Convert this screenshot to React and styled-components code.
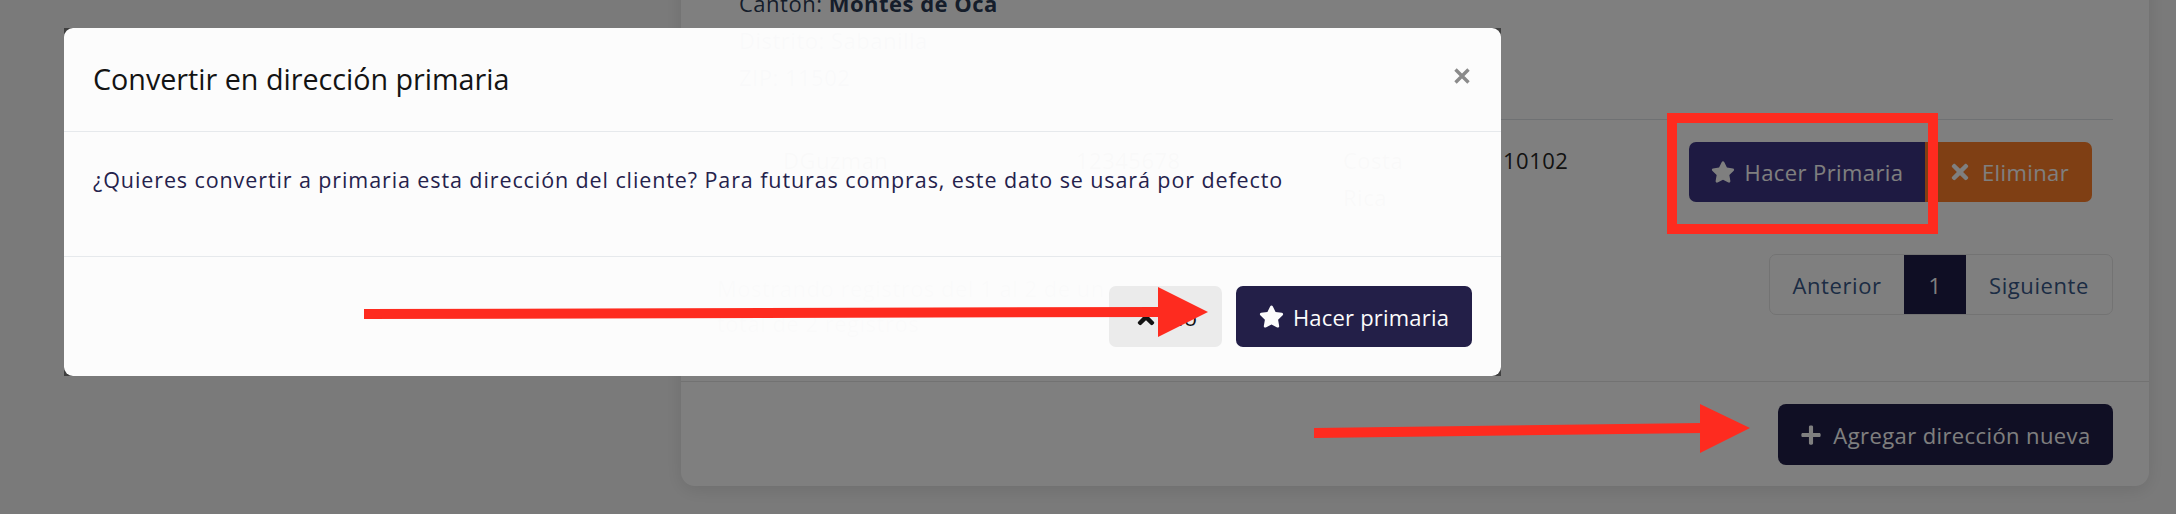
import React from 'react'
import styled, { createGlobalStyle } from 'styled-components'
import { FaStar, FaTimes, FaPlus } from 'react-icons/fa'

const GlobalStyle = createGlobalStyle`
	html, body {
		margin: 0;
		padding: 0;
	}
	body {
		width: 2176px;
		height: 514px;
		overflow: hidden;
		background: #f5f5f5;
		font-family: 'Open Sans', Lato, sans-serif;
	}
	* {
		box-sizing: border-box;
	}
`

function AddressPage() {
	return (
		<StyledPage>
			<StyledCard>
				<StyledCardBody>
					<StyledDetails>
						<div>
							Provincia: <b>San José</b>
						</div>
						<div>
							Canton: <b>Montes de Oca</b>
						</div>
						<div>Distrito: Sabanilla</div>
						<div>ZIP: 11502</div>
					</StyledDetails>
					<StyledRow>
						<StyledCell $center>
							<StyledRadio />
						</StyledCell>
						<StyledCell>DGuzman</StyledCell>
						<StyledCell>12345678</StyledCell>
						<StyledCell $narrow>Costa Rica</StyledCell>
						<StyledCell>10102</StyledCell>
						<StyledCell>
							<StyledButtonGroup>
								<StyledRowButton $bg="#3c3584" $w="236px" $first>
									<FaStar size={24} />
									Hacer Primaria
								</StyledRowButton>
								<StyledRowButton $bg="#fe7e28" $w="167px">
									<FaTimes size={24} />
									Eliminar
								</StyledRowButton>
							</StyledButtonGroup>
						</StyledCell>
					</StyledRow>
					<StyledTableFooter>
						<StyledInfo>
							Mostrando registros del 1 al 2 de un total de 2 registros
						</StyledInfo>
						<StyledPagination>
							<StyledPageLink $w="134px">Anterior</StyledPageLink>
							<StyledPageLink $w="62px" $active>
								1
							</StyledPageLink>
							<StyledPageLink $w="146px">Siguiente</StyledPageLink>
						</StyledPagination>
					</StyledTableFooter>
				</StyledCardBody>
				<StyledCardFooter>
					<StyledAddButton>
						<FaPlus size={22} />
						Agregar dirección nueva
					</StyledAddButton>
				</StyledCardFooter>
			</StyledCard>
		</StyledPage>
	)
}

function PrimaryModal() {
	return (
		<>
			<StyledBackdrop />
			<StyledDialog role="dialog">
				<StyledModalHeader>
					<StyledModalTitle>Convertir en dirección primaria</StyledModalTitle>
					<StyledClose aria-label="Cerrar">
						<svg width="18" height="18" viewBox="0 0 18 18">
							<path
								d="M2.5 2.5 L15.5 15.5 M15.5 2.5 L2.5 15.5"
								stroke="currentColor"
								strokeWidth="3.4"
							/>
						</svg>
					</StyledClose>
				</StyledModalHeader>
				<StyledModalBody>
					¿Quieres convertir a primaria esta dirección del cliente? Para
					futuras compras, este dato se usará por defecto
				</StyledModalBody>
				<StyledModalFooter>
					<StyledModalButton $variant="light" $w="113px">
						<FaTimes size={24} />
						No
					</StyledModalButton>
					<StyledModalButton $w="236px">
						<FaStar size={25} />
						Hacer primaria
					</StyledModalButton>
				</StyledModalFooter>
			</StyledDialog>
		</>
	)
}

function Annotations() {
	return (
		<StyledAnnotations width="2176" height="514" viewBox="0 0 2176 514">
			<rect
				x="1672"
				y="118"
				width="261"
				height="111"
				fill="none"
				stroke="#fe2b1f"
				strokeWidth="10"
			/>
			<polygon points="364,309 1160,307 1160,317 364,319" fill="#fe2b1f" />
			<polygon points="1158,287 1208,312 1158,337" fill="#fe2b1f" />
			<polygon points="1314,428 1702,423 1702,433 1314,438" fill="#fe2b1f" />
			<polygon points="1700,404 1750,428 1700,453" fill="#fe2b1f" />
		</StyledAnnotations>
	)
}

export default function App() {
	return (
		<>
			<GlobalStyle />
			<AddressPage />
			<PrimaryModal />
			<Annotations />
		</>
	)
}

const StyledPage = styled.main`
	height: 514px;
	padding: 0 27px 0 681px;
	overflow: hidden;
`
const StyledCard = styled.section`
	margin-top: -52px;
	background: #fff;
	border-radius: 0 0 14px 14px;
	box-shadow: 0 4px 18px rgba(0, 0, 0, 0.1);
	color: #252525;
	font-size: 22px;
	letter-spacing: 0.5px;
`
const StyledCardBody = styled.div`
	padding: 0 36px 40px;
`
const StyledDetails = styled.div`
	padding: 0 22px 23px;
	line-height: 37px;
	color: #2b3a55;
	border-bottom: 1px solid #dfe2e6;
	b {
		font-weight: 700;
	}
`
const StyledRow = styled.div`
	display: grid;
	grid-template-columns: 58px 293px 267px 160px 186px 1fr;
	align-items: start;
	padding: 22px 0 25px;
	line-height: 37px;
`
const StyledCell = styled.div`
	padding: 0 8px;
	align-self: ${(p) => (p.$center ? 'center' : 'start')};
	max-width: ${(p) => (p.$narrow ? '110px' : 'none')};
`
const StyledRadio = styled.span`
	display: block;
	width: 28px;
	height: 28px;
	border-radius: 50%;
	border: 2px solid #c9c9c9;
`
const StyledButtonGroup = styled.div`
	display: flex;
`
const StyledRowButton = styled.button`
	display: flex;
	align-items: center;
	justify-content: center;
	gap: 10px;
	width: ${(p) => p.$w};
	height: 60px;
	padding: 0;
	border: none;
	border-radius: ${(p) => (p.$first ? '7px 0 0 7px' : '0 7px 7px 0')};
	background: ${(p) => p.$bg};
	color: #fff;
	font-family: inherit;
	font-size: 22px;
	letter-spacing: 0.4px;
`
const StyledTableFooter = styled.div`
	display: flex;
	justify-content: space-between;
	align-items: flex-start;
`
const StyledInfo = styled.p`
	width: 420px;
	margin: 0;
	padding-top: 30px;
	line-height: 35px;
	color: #6c757d;
`
const StyledPagination = styled.nav`
	display: flex;
	height: 61px;
	margin-top: 13px;
	border: 1px solid #e6e6e6;
	border-radius: 7px;
	overflow: hidden;
`
const StyledPageLink = styled.span`
	display: flex;
	align-items: center;
	justify-content: center;
	width: ${(p) => p.$w};
	background: ${(p) => (p.$active ? '#1e1c48' : 'transparent')};
	color: ${(p) => (p.$active ? '#fff' : '#385888')};
	font-size: 22px;
	letter-spacing: 0.6px;
`
const StyledCardFooter = styled.div`
	display: flex;
	justify-content: flex-end;
	padding: 22px 36px 21px;
	border-top: 1px solid #e4e4e4;
`
const StyledAddButton = styled.button`
	display: flex;
	align-items: center;
	justify-content: center;
	gap: 11px;
	width: 335px;
	height: 61px;
	padding: 0;
	border: none;
	border-radius: 8px;
	background: #201e48;
	color: #fff;
	font-family: inherit;
	font-size: 22px;
	letter-spacing: 0.4px;
`
const StyledBackdrop = styled.div`
	position: fixed;
	inset: 0;
	background: rgba(0, 0, 0, 0.5);
`
const StyledDialog = styled.div`
	position: fixed;
	top: 28px;
	left: 64px;
	width: 1437px;
	background: #fff;
	border-radius: 9px;
	opacity: 0.975;
`
const StyledModalHeader = styled.header`
	display: flex;
	align-items: center;
	justify-content: space-between;
	height: 104px;
	padding: 0 30px 0 29px;
	border-bottom: 1px solid #e9ecef;
`
const StyledModalTitle = styled.h5`
	margin: 0;
	padding-bottom: 3px;
	font-size: 28.7px;
	font-weight: 400;
	color: #111;
`
const StyledClose = styled.button`
	display: flex;
	padding: 0;
	margin-bottom: 7px;
	border: none;
	background: none;
	color: #8c8c8c;
`
const StyledModalBody = styled.div`
	padding: 31px 29px 60px;
	font-size: 21.5px;
	letter-spacing: 0.9px;
	line-height: 33px;
	color: #23204b;
`
const StyledModalFooter = styled.footer`
	display: flex;
	justify-content: flex-end;
	gap: 14px;
	padding: 29px;
	border-top: 1px solid #e9ecef;
`
const StyledModalButton = styled.button`
	display: flex;
	align-items: center;
	justify-content: center;
	gap: 9px;
	width: ${(p) => p.$w};
	height: 61px;
	padding: 0;
	border: none;
	border-radius: 7px;
	background: ${(p) => (p.$variant === 'light' ? '#eeeeee' : '#211d47')};
	color: ${(p) => (p.$variant === 'light' ? '#111' : '#fff')};
	font-family: inherit;
	font-size: 22px;
	letter-spacing: 0.2px;
`
const StyledAnnotations = styled.svg`
	position: fixed;
	top: 0;
	left: 0;
	pointer-events: none;
`
